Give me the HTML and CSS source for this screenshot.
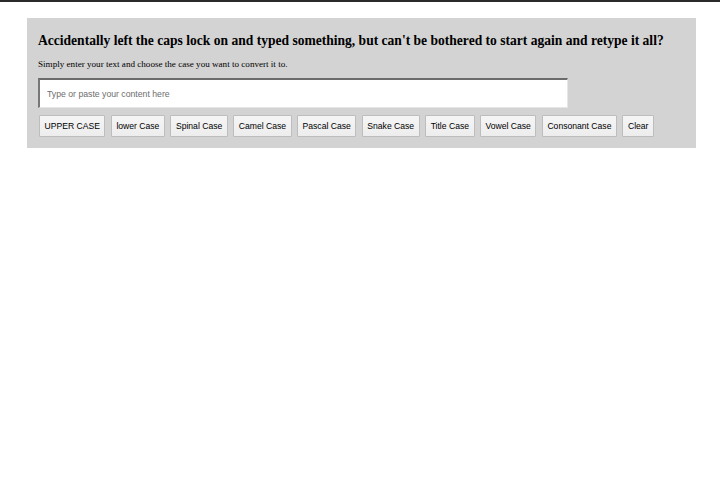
FILE: index.html
```html
<!DOCTYPE html>
<html>
<head>
<meta charset="utf-8">
<link rel="stylesheet" href="styles.css">
</head>
<body>
<div class="topbar"></div>
<main class="panel">
  <h1 class="title">Accidentally left the caps lock on and typed something, but can't be bothered to start again and retype it all?</h1>
  <p class="intro">Simply enter your text and choose the case you want to convert it to.</p>
  <input class="content" type="text" placeholder="Type or paste your content here">
  <div class="buttons">
    <button class="btn">UPPER CASE</button>
    <button class="btn">lower Case</button>
    <button class="btn">Spinal Case</button>
    <button class="btn">Camel Case</button>
    <button class="btn">Pascal Case</button>
    <button class="btn">Snake Case</button>
    <button class="btn">Title Case</button>
    <button class="btn">Vowel Case</button>
    <button class="btn">Consonant Case</button>
    <button class="btn">Clear</button>
  </div>
</main>
</body>
</html>
```
FILE: styles.css
```css
html, body {
  margin: 0;
  padding: 0;
  background: #fff;
}
body {
  font-family: "Liberation Serif", "Times New Roman", serif;
  color: #000;
}
.topbar {
  height: 2px;
  background: #2b2b2b;
}
.panel {
  margin: 16px 24px 0 27px;
  width: 647px;
  background: #d3d3d3;
  padding: 13px 11px 11px 11px;
}
.title {
  font-size: 13.55px;
  font-weight: bold;
  margin: 0 0 7px 0;
  line-height: 20px;
  white-space: nowrap;
}
.intro {
  font-size: 9.1px;
  margin: 0 0 7px 0;
  line-height: 13px;
}
.content {
  display: block;
  box-sizing: border-box;
  width: 530px;
  height: 30px;
  margin: 0 0 7px 0;
  padding: 0 7px;
  border-style: solid;
  border-width: 2px 1px 1px 2px;
  border-color: #6b6b6b #e6e6e6 #e6e6e6 #777;
  background: #fff;
  font-family: "Liberation Sans", Arial, sans-serif;
  font-size: 8.7px;
  outline: none;
}
.content::placeholder {
  color: #6d6d6d;
}
.buttons {
  display: flex;
  gap: 5.5px;
  padding-left: 1px;
}
.btn {
  height: 22px;
  padding: 0 4.5px;
  border: 1px solid #bdbdbd;
  background: linear-gradient(#f5f5f5, #ededed);
  font-family: "Liberation Sans", Arial, sans-serif;
  font-size: 8.6px;
  color: #000;
  border-radius: 1px;
}
```
